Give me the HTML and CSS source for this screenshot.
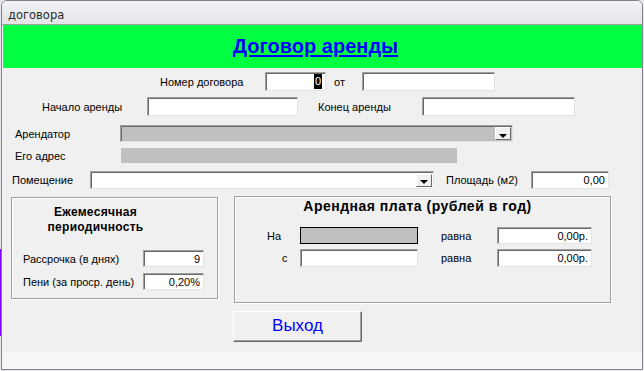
FILE: index.html
```html
<!DOCTYPE html>
<html lang="ru">
<head>
  <meta charset="UTF-8">
  <title>договора</title>
  <link rel="stylesheet" href="styles.css">
</head>
<body>
  <div class="screen">
    <div class="behind"><div class="strip"></div></div>

    <div class="window">
      <div class="titlebar">договора</div>

      <div class="client">
        <div class="header"><span class="heading">Договор аренды</span></div>

        <div class="form">
          <!-- номер и дата -->
          <div class="row r1">
            <span class="lab lab-num">Номер договора</span>
            <div class="field f-num"><span class="sel">0</span></div>
            <span class="lab lab-ot">от</span>
            <div class="field f-date"></div>
          </div>

          <div class="row r2">
            <span class="lab lab-start">Начало аренды</span>
            <div class="field f-start"></div>
            <span class="lab lab-end">Конец аренды</span>
            <div class="field f-end"></div>
          </div>

          <div class="row r3">
            <span class="lab lab-tenant">Арендатор</span>
            <div class="field combo gray c-tenant"><span class="drop"></span></div>
          </div>

          <div class="row r4">
            <span class="lab lab-addr">Его адрес</span>
            <div class="flat"></div>
          </div>

          <div class="row r5">
            <span class="lab lab-room">Помещение</span>
            <div class="field combo c-room"><span class="drop"></span></div>
            <span class="lab lab-area">Площадь (м2)</span>
            <div class="field f-area">0,00</div>
          </div>

          <div class="groups">
            <div class="group g-month">
              <div class="g-title small">Ежемесячная<br>периодичность</div>
              <div class="g-row first">
                <span class="lab lab-g1">Рассрочка (в днях)</span>
                <div class="field f-g1">9</div>
              </div>
              <div class="g-row">
                <span class="lab lab-g1">Пени (за проср. день)</span>
                <div class="field f-g1">0,20%</div>
              </div>
            </div>

            <div class="group g-rent">
              <div class="g-title big">Арендная плата (рублей в год)</div>
              <div class="g-row first">
                <span class="lab lab-na">На</span>
                <div class="field boxed f-period"></div>
                <span class="lab lab-eq">равна</span>
                <div class="field f-sum">0,00р.</div>
              </div>
              <div class="g-row second">
                <span class="lab lab-s">с</span>
                <div class="field f-period"></div>
                <span class="lab lab-eq">равна</span>
                <div class="field f-sum">0,00р.</div>
              </div>
            </div>
          </div>

          <div class="actions">
            <button class="exit-btn" type="button">Выход</button>
          </div>
        </div>

        <div class="footer"></div>
      </div>
    </div>
  </div>
</body>
</html>
```

FILE: styles.css
```css
* { box-sizing: border-box; }

body {
  margin: 0;
  background: #e6e8eb;
  font-family: "Liberation Sans", Arial, sans-serif;
  font-size: 11px;
  color: #000;
}

.screen { display: flex; height: 371px; }

.behind { width: 1px; }
.behind .strip { margin-top: 249px; height: 87px; background: #8000ff; }

.window {
  width: 642px;
  height: 370px;
  border: 1px solid #7d838a;
  border-radius: 6px 6px 0 0;
  background: #f7f7f7;
  display: flex; flex-direction: column;
  overflow: hidden;
}

.titlebar {
  height: 24px;
  padding: 7px 0 0 6px;
  font-family: "DejaVu Sans", "Liberation Sans", sans-serif;
  font-size: 11.5px;
  color: #2b2b2b;
  background: linear-gradient(#f0f1f4, #e3e5e9);
  border-bottom: 1px solid #9ca1a8;
}

.client {
  flex: 1;
  margin-left: 1px;
  display: flex; flex-direction: column;
}

.header {
  height: 43px;
  background: #00ff40;
  display: flex; align-items: center; justify-content: center;
  padding: 0 14px 1px 0;
}
.heading {
  color: #0000ff;
  font-weight: 700;
  font-size: 20px;
  text-decoration: underline;
  text-decoration-thickness: 2px;
  text-underline-offset: 2px;
}

.form {
  height: 284px;
  background: #f0f0f0;
  display: flex; flex-direction: column;
}

.row { display: flex; align-items: center; }
.r1 { margin-top: 4px; height: 19px; }
.r2 { margin-top: 6px; height: 19px; }
.r3 { margin-top: 9px; height: 17px; }
.r4 { margin-top: 6px; height: 15px; }
.r5 { margin-top: 8px; height: 18px; }

.lab { flex: none; white-space: nowrap; }

.field {
  flex: none;
  height: 100%;
  background: #fff;
  border: 1px solid;
  border-color: #a0a0a0 #e3e3e3 #e3e3e3 #a0a0a0;
  box-shadow: inset 1px 1px #696969;
  display: flex; align-items: center; justify-content: flex-end;
  padding-right: 3px;
}
.field.gray { background: #c0c0c0; }
.field.boxed {
  background: #c0c0c0;
  border: 1px solid #000;
  box-shadow: none;
}

.sel {
  background: #000;
  color: #fff;
  height: 15px;
  line-height: 15px;
  padding: 0 1px;
}

.lab-num { margin-left: 157px; width: 105px; }
.f-num { width: 61px; }
.lab-ot { margin-left: 8px; width: 28px; }
.f-date { width: 133px; }

.lab-start { margin-left: 39px; width: 105px; }
.f-start { width: 151px; }
.lab-end { margin-left: 20px; width: 104px; }
.f-end { width: 153px; }

.lab-tenant { margin-left: 12px; width: 105px; }
.c-tenant { width: 393px; }

.lab-addr { margin-left: 12px; width: 106px; }
.flat { width: 336px; height: 100%; background: #c0c0c0; }

.lab-room { margin-left: 9px; width: 78px; }
.c-room { width: 344px; }
.lab-area { margin-left: 12px; width: 85px; }
.f-area { width: 78px; }

.combo { padding-right: 1px; }
.drop {
  width: 16px; height: 13px;
  background: #f0f0f0;
  border: 1px solid;
  border-color: #fff #696969 #696969 #fff;
  display: flex; align-items: center; justify-content: center;
  padding-top: 4px;
}
.drop::after {
  content: "";
  border-left: 4px solid transparent;
  border-right: 4px solid transparent;
  border-top: 4px solid #000;
}

.groups { display: flex; align-items: flex-start; margin-top: 7px; }

.group {
  flex: none;
  border: 1px solid #a0a0a0;
  box-shadow: inset 1px 1px #fff, 1px 1px #fff;
  display: flex; flex-direction: column;
}
.g-month { margin: 1px 0 0 8px; width: 207px; height: 102px; }
.g-rent { margin-left: 16px; width: 377px; height: 107px; padding-right: 10px; }

.g-title { font-weight: 700; text-align: center; }
.g-title.small {
  margin: 7px 0 0 18px;
  width: 131px;
  font-size: 12px;
  line-height: 15px;
  letter-spacing: 0.3px;
}
.g-title.big {
  margin-top: 1px;
  font-size: 14px;
  line-height: 16px;
  letter-spacing: 0.5px;
}

.g-row { display: flex; align-items: center; }
.g-month .g-row { height: 17px; margin-top: 6px; }
.g-month .g-row.first { margin-top: 15px; }
.lab-g1 { margin-left: 11px; width: 120px; }
.f-g1 { width: 61px; }

.g-rent .g-row.first { margin-top: 13px; height: 17px; }
.g-rent .g-row.second { margin-top: 5px; height: 18px; }
.lab-na { margin-left: 32px; width: 33px; }
.lab-s { margin-left: 47px; width: 18px; }
.f-period { width: 118px; }
.lab-eq { margin-left: 23px; width: 56px; }
.f-sum { width: 95px; }

.actions { margin-top: 8px; padding-left: 230px; }
.exit-btn {
  width: 129px; height: 31px;
  background: #f0f0f0;
  border: 1px solid;
  border-color: #fff #696969 #696969 #fff;
  box-shadow: inset -1px -1px #a0a0a0;
  color: #0000ff;
  font-family: "Liberation Sans", Arial, sans-serif;
  font-size: 17px;
  padding: 0 0 2px;
}

.footer { flex: 1; background: #f7f7f7; }
```
